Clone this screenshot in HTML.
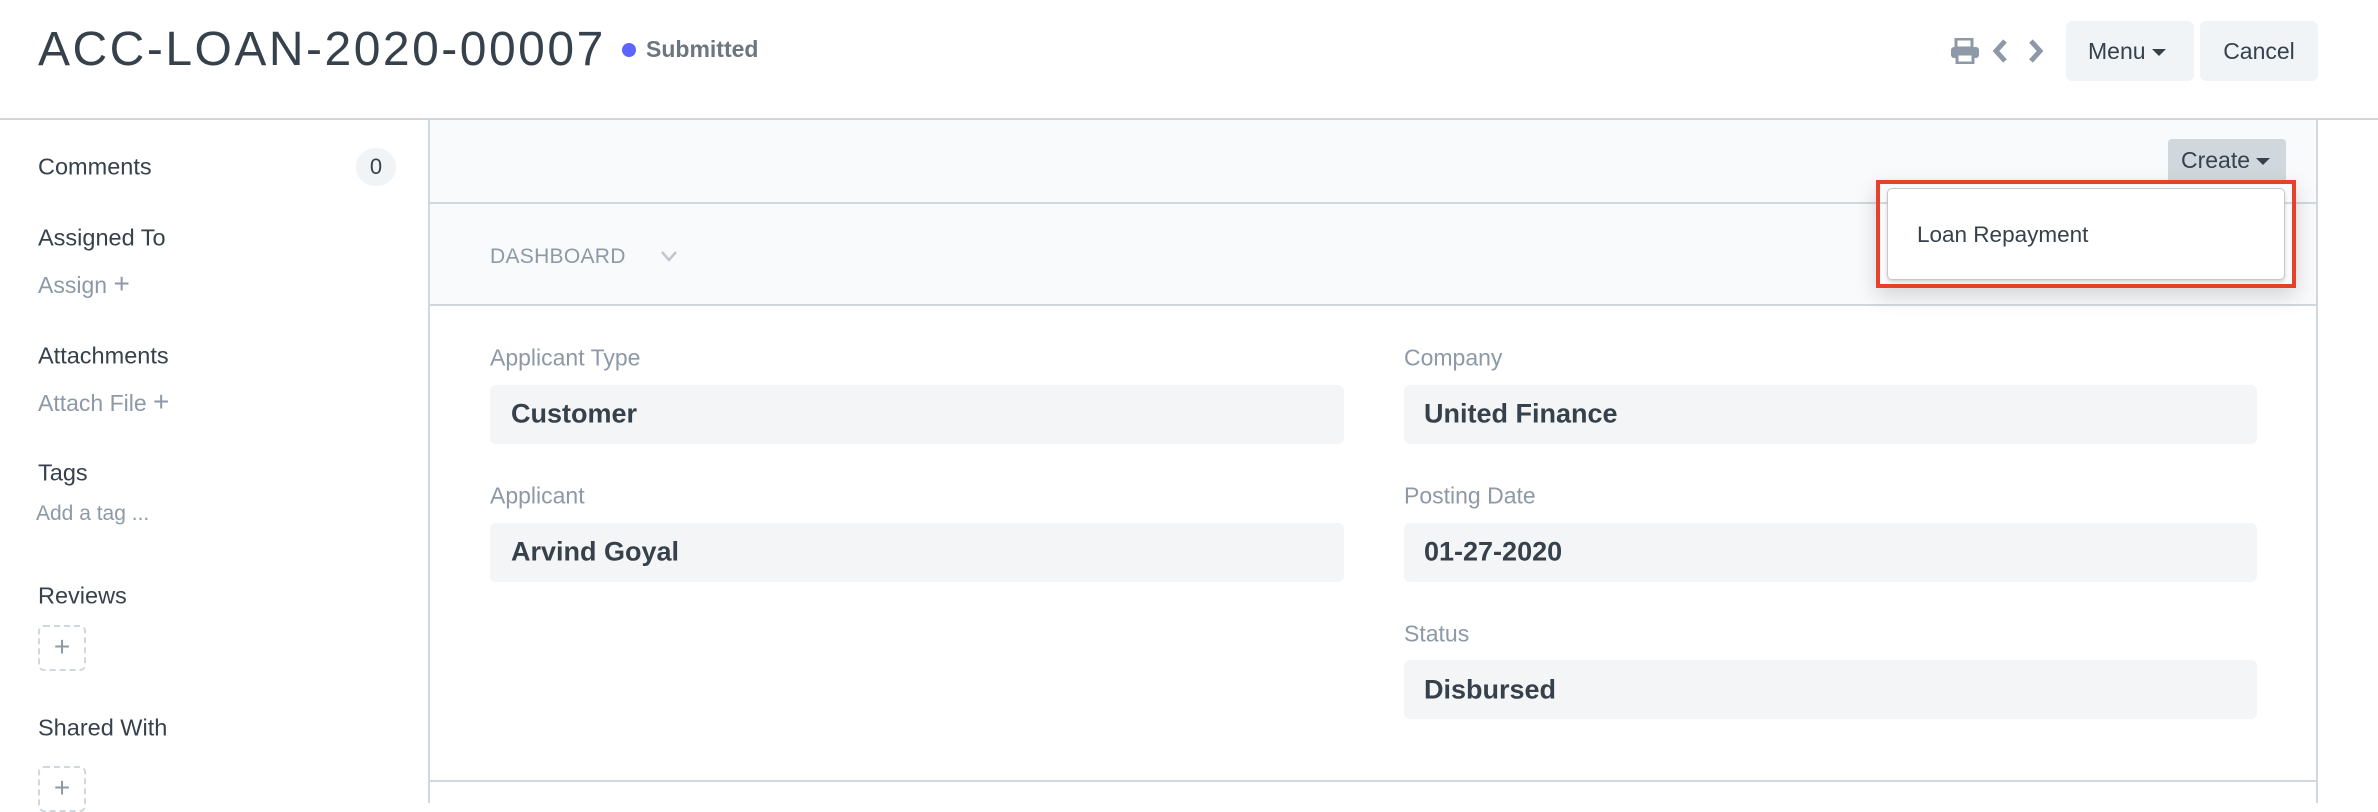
<!DOCTYPE html>
<html><head><meta charset="utf-8"><style>
*{margin:0;padding:0;box-sizing:border-box}
body{width:2378px;height:803px;overflow:hidden;background:#fff;font-family:"Liberation Sans",sans-serif;color:#36414c;position:relative}
.a{position:absolute;white-space:nowrap}
.lbl{font-size:23.5px;color:#36414c;transform:translateY(-50%)}
.mut{font-size:23px;color:#8d99a6;transform:translateY(-50%)}
.box{position:absolute;background:#f4f5f6;border-radius:6px}
.val{position:absolute;font-size:27px;font-weight:bold;color:#36414c;transform:translateY(-50%)}
.flab{font-size:23px;color:#8d99a6;transform:translateY(-50%)}
.plus{position:absolute;width:48px;height:46px;border:2px dashed #d1d8dd;border-radius:6px;color:#8d99a6;font-size:28px;text-align:center;line-height:40px}
</style></head><body>
<div class="a" style="left:38px;top:22px;font-size:48px;letter-spacing:2.5px;color:#36414c;line-height:56px">ACC-LOAN-2020-00007</div>
<div class="a" style="left:622px;top:43px;width:14px;height:14px;border-radius:50%;background:#5e64ff"></div>
<div class="a" style="left:646px;top:36px;font-size:23px;font-weight:bold;color:#6c7680;line-height:26px">Submitted</div>
<svg class="a" style="left:1950px;top:38px" width="30" height="26" viewBox="0 0 30 26"><rect x="6" y="1" width="16" height="9" fill="none" stroke="#8d99a6" stroke-width="3"/><rect x="1" y="9" width="28" height="11" rx="3" fill="#8d99a6"/><rect x="7" y="16" width="16" height="9" fill="#fff" stroke="#8d99a6" stroke-width="3"/></svg>
<svg class="a" style="left:1992px;top:38px" width="56" height="26" viewBox="0 0 56 26"><path d="M13 3 L4 13 L13 23" fill="none" stroke="#8d99a6" stroke-width="5"/><path d="M39 3 L48 13 L39 23" fill="none" stroke="#8d99a6" stroke-width="5"/></svg>
<div class="a" style="left:2066px;top:21px;width:128px;height:60px;background:#f0f4f7;border-radius:6px;font-size:23px;line-height:60px;padding-left:22px;color:#36414c">Menu <span style="display:inline-block;border-left:7px solid transparent;border-right:7px solid transparent;border-top:7px solid #36414c;vertical-align:middle"></span></div>
<div class="a" style="left:2200px;top:21px;width:118px;height:60px;background:#f0f4f7;border-radius:6px;font-size:23px;line-height:60px;text-align:center;color:#36414c">Cancel</div>
<div class="a" style="left:0;top:118px;width:2378px;height:2px;background:#d1d8dd"></div>
<div class="a" style="left:428px;top:120px;width:2px;height:683px;background:#d1d8dd"></div>
<div class="a" style="left:2316px;top:120px;width:2px;height:683px;background:#d1d8dd"></div>
<div class="a" style="left:430px;top:120px;width:1886px;height:83px;background:#f9fafb"></div>
<div class="a" style="left:430px;top:202px;width:1886px;height:2px;background:#d1d8dd"></div>
<div class="a" style="left:430px;top:204px;width:1886px;height:101px;background:#f9fafb"></div>
<div class="a" style="left:430px;top:304px;width:1886px;height:2px;background:#d1d8dd"></div>
<div class="a" style="left:430px;top:780px;width:1886px;height:2px;background:#d1d8dd"></div>
<div class="a" style="left:2168px;top:139px;width:118px;height:42px;background:#d1d8dd;border-radius:4px 4px 0 0;font-size:23px;line-height:42px;padding-left:13px;color:#36414c">Create <span style="display:inline-block;border-left:7px solid transparent;border-right:7px solid transparent;border-top:7px solid #36414c;vertical-align:middle"></span></div>
<div class="a" style="left:490px;top:257px;font-size:21px;letter-spacing:0.3px;color:#8d99a6;transform:translateY(-50%)">DASHBOARD</div>
<svg class="a" style="left:660px;top:250px" width="18" height="12" viewBox="0 0 18 12"><path d="M2 2 L9 10 L16 2" fill="none" stroke="#c0c6cc" stroke-width="2.5"/></svg>
<div class="a lbl" style="left:38px;top:167px">Comments</div>
<div class="a" style="left:356px;top:148px;width:40px;height:38px;border-radius:19px;background:#f0f4f7;font-size:22px;text-align:center;line-height:38px">0</div>
<div class="a lbl" style="left:38px;top:238px">Assigned To</div>
<div class="a mut" style="left:38px;top:284px">Assign <span style="font-size:28px">+</span></div>
<div class="a lbl" style="left:38px;top:356px">Attachments</div>
<div class="a mut" style="left:38px;top:402px">Attach File <span style="font-size:28px">+</span></div>
<div class="a lbl" style="left:38px;top:473px">Tags</div>
<div class="a mut" style="left:36px;top:514px;font-size:21px">Add a tag ...</div>
<div class="a lbl" style="left:38px;top:596px">Reviews</div>
<div class="plus" style="left:38px;top:625px">+</div>
<div class="a lbl" style="left:38px;top:728px">Shared With</div>
<div class="plus" style="left:38px;top:766px">+</div>
<div class="a flab" style="left:490px;top:358px">Applicant Type</div>
<div class="box" style="left:490px;top:385px;width:854px;height:59px"></div>
<div class="val" style="left:511px;top:414px">Customer</div>
<div class="a flab" style="left:490px;top:496px">Applicant</div>
<div class="box" style="left:490px;top:523px;width:854px;height:59px"></div>
<div class="val" style="left:511px;top:552px">Arvind Goyal</div>
<div class="a flab" style="left:1404px;top:358px">Company</div>
<div class="box" style="left:1404px;top:385px;width:853px;height:59px"></div>
<div class="val" style="left:1424px;top:414px">United Finance</div>
<div class="a flab" style="left:1404px;top:496px">Posting Date</div>
<div class="box" style="left:1404px;top:523px;width:853px;height:59px"></div>
<div class="val" style="left:1424px;top:552px">01-27-2020</div>
<div class="a flab" style="left:1404px;top:634px">Status</div>
<div class="box" style="left:1404px;top:660px;width:853px;height:59px"></div>
<div class="val" style="left:1424px;top:690px">Disbursed</div>
<div class="a" style="left:1876px;top:180px;width:420px;height:108px;border:4px solid #e8412a;box-shadow:0 8px 20px rgba(0,0,0,.15)"></div>
<div class="a" style="left:1887px;top:188px;width:398px;height:92px;background:#fff;border:1px solid #c8c8c8;border-radius:5px;box-shadow:0 2px 3px rgba(0,0,0,.15)"></div>
<div class="a" style="left:1917px;top:235px;font-size:22.5px;color:#36414c;transform:translateY(-50%)">Loan Repayment</div>
</body></html>
